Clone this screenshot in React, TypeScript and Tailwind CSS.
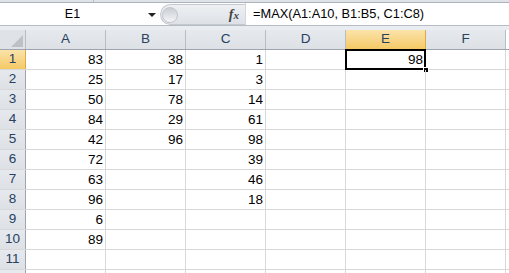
import React from 'react';

// === 試算表資料 ===
const columns = ['A', 'B', 'C', 'D', 'E', 'F'];
const data: Record<string, (number | null)[]> = {
  A: [83, 25, 50, 84, 42, 72, 63, 96, 6, 89, null],
  B: [38, 17, 78, 29, 96, null, null, null, null, null, null],
  C: [1, 3, 14, 61, 98, 39, 46, 18, null, null, null],
  D: [],
  E: [98],
  F: [],
};
const rows = Array.from({ length: 11 }, (_, i) => i + 1);

const font = { fontFamily: '"Liberation Sans", Arial, sans-serif' };

export default function App() {
  return (
    <div className="w-[509px] h-[273px] overflow-hidden bg-white text-black" style={font}>
      {/* ribbon bottom edge */}
      <div className="h-[3px] bg-[#dfe3e8] border-b border-[#aab3be] relative">
        <div className="absolute left-[93px] top-0 w-px h-full bg-[#b9c0c8]"></div>
      </div>

      {/* formula bar */}
      <div className="h-[23px] flex items-stretch bg-white border-b border-[#b6bcc4]">
        <div className="w-[160px] relative flex items-center">
          <span className="w-[145px] text-center text-[12.5px] text-black">E1</span>
          <div className="absolute left-[148px] top-[10px] w-0 h-0 border-l-[4px] border-r-[4px] border-t-[4px] border-l-transparent border-r-transparent border-t-[#222]"></div>
        </div>
        <div className="w-[85px] mt-[1px] bg-gradient-to-b from-[#eef0f3] to-[#dde1e6] rounded-l-[11px] border border-r-0 border-[#c4c9d0] flex items-center">
          <div className="ml-[1px] w-[16px] h-[16px] rounded-full bg-gradient-to-b from-[#c9ced5] to-[#f4f5f7] border border-[#c2c7ce]"></div>
          <span className="ml-auto mr-[6px] text-[14px] italic font-bold text-[#444]" style={{ fontFamily: '"Liberation Serif", serif' }}>
            f<span className="text-[11px]">x</span>
          </span>
        </div>
        <div className="flex-1 flex items-center pl-[7px] border-l border-[#d3d7dc]">
          <span className="text-[12.8px] whitespace-nowrap">=MAX(A1:A10, B1:B5, C1:C8)</span>
        </div>
      </div>

      {/* gap above headers */}
      <div className="h-[4px] bg-[#e9ecf0]"></div>

      {/* column headers */}
      <div className="flex h-[20px] border-b border-[#9ea4ab]">
        <div className="w-[26px] shrink-0 bg-[#dfe3e8] border-r border-[#b8bdc4] flex items-end justify-end pr-[2px] pb-[2px]">
          <svg width="12" height="12" viewBox="0 0 12 12">
            <polygon points="12,0 12,12 0,12" fill="#bcc1c8" />
          </svg>
        </div>
        {columns.map((c) => (
          <div
            key={c}
            className={
              c === 'E'
                ? 'w-[80px] shrink-0 bg-gradient-to-b from-[#fae3a9] to-[#f5c964] border-r border-[#e1a945] flex items-center justify-center text-[13.5px] text-[#27415f]'
                : 'w-[80px] shrink-0 bg-gradient-to-b from-[#e6e9ed] to-[#dde1e6] border-r border-[#b8bdc4] flex items-center justify-center text-[13.5px] text-[#27415f]'
            }
          >
            {c}
          </div>
        ))}
      </div>

      {/* rows */}
      {rows.map((r) => (
        <div key={r} className="flex h-[20px] border-b border-[#d8d8d8]">
          <div
            className={
              r === 1
                ? 'w-[26px] shrink-0 bg-gradient-to-b from-[#fae3a9] to-[#f5c964] border-r border-[#e1a945] flex items-center justify-center text-[13.5px] text-[#27415f]'
                : 'w-[26px] shrink-0 bg-gradient-to-b from-[#e6e9ed] to-[#dde1e6] border-r border-[#9ea4ab] flex items-center justify-center text-[13.5px] text-[#27415f]'
            }
          >
            {r}
          </div>
          {columns.map((c) => {
            const v = data[c][r - 1];
            const selected = c === 'E' && r === 1;
            return (
              <div
                key={c}
                className="w-[80px] shrink-0 border-r border-[#d8d8d8] relative flex items-end justify-end pr-[2px] pb-[3px] text-[13.5px] leading-none"
              >
                {v !== null && v !== undefined ? v : ''}
                {selected && (
                  <>
                    <div className="absolute left-[-1px] top-[-1px] w-[81px] h-[21px] border-2 border-black"></div>
                    <div className="absolute right-[-4px] bottom-[-4px] w-[6px] h-[6px] bg-black border border-white"></div>
                  </>
                )}
              </div>
            );
          })}
        </div>
      ))}

      {/* next row, cut off by the window */}
      <div className="flex h-[20px]">
        <div className="w-[26px] shrink-0 bg-[#e6e9ed] border-r border-[#9ea4ab]"></div>
        {columns.map((c) => (
          <div key={c} className="w-[80px] shrink-0 border-r border-[#d8d8d8]"></div>
        ))}
      </div>
    </div>
  );
}
